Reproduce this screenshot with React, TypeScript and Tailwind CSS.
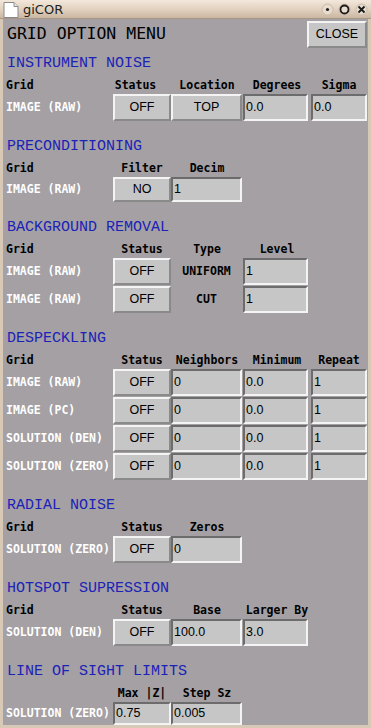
import React from "react";

const mono = "font-['DejaVu_Sans_Mono',monospace]";
const sans = "font-['Liberation_Sans',Arial,sans-serif]";

const widths = ["w-[58px]", "w-[71px]", "w-[65px]", "w-[56px]"];

type Cell =
  | { kind: "btn"; text: string }
  | { kind: "field"; text: string }
  | { kind: "label"; text: string }
  | { kind: "none" };

function Heading({ children, first }: { children: React.ReactNode; first?: boolean }) {
  return (
    <div
      className={`${first ? "h-[21px] pt-[6px]" : "h-[33px] pt-[18px]"} pl-[4px] font-['Liberation_Mono',monospace] text-[15px] leading-[15px] text-[#1a22b8] whitespace-pre`}
    >
      {children}
    </div>
  );
}

function Headers({ grid, cols, statusShift }: { grid?: boolean; cols: string[]; statusShift?: boolean }) {
  return (
    <div className={`grid grid-cols-[110px_58px_72px_68px_56px] h-[23px] pt-[8px] ${mono} font-bold text-[11.5px] leading-[12px] text-black whitespace-pre`}>
      <div className="pl-[3px]">{grid ? "Grid" : ""}</div>
      {cols.map((c, i) => (
        <div key={i} className={`text-center ${i === 0 && statusShift ? "pr-[13px]" : ""}`}>
          {c}
        </div>
      ))}
    </div>
  );
}

function Row({ label, cells, h = "h-[27px]" }: { label: string; cells: Cell[]; h?: string }) {
  return (
    <div className={`grid grid-cols-[110px_58px_72px_68px_56px] ${h}`}>
      <div className={`flex items-center pl-[3px] ${mono} font-bold text-[11.5px] text-white whitespace-pre`}>{label}</div>
      {cells.map((c, i) => {
        if (c.kind === "btn")
          return (
            <div
              key={i}
              className={`${widths[i]} h-full flex items-center justify-center bg-[#c6c6c6] border-2 border-t-[#f4f4f4] border-l-[#f4f4f4] border-b-[#8a8a8a] border-r-[#8a8a8a] ${sans} text-[12.5px] text-black`}
            >
              {c.text}
            </div>
          );
        if (c.kind === "field")
          return (
            <div
              key={i}
              className={`${widths[i]} h-full flex items-center pl-[1px] bg-[#c6c6c6] border-2 border-t-[#6c6c6c] border-l-[#6c6c6c] border-b-[#f4f4f4] border-r-[#f4f4f4] ${sans} text-[12.5px] text-black`}
            >
              {c.text}
            </div>
          );
        if (c.kind === "label")
          return (
            <div key={i} className={`${widths[i]} h-full flex items-center justify-center ${mono} font-bold text-[11.5px] text-black`}>
              {c.text}
            </div>
          );
        return <div key={i} />;
      })}
    </div>
  );
}

const B = (t: string): Cell => ({ kind: "btn", text: t });
const F = (t: string): Cell => ({ kind: "field", text: t });
const L = (t: string): Cell => ({ kind: "label", text: t });

function TitleBar() {
  return (
    <div className="h-[19px] flex items-center bg-linear-to-b from-[#f3e8dc] via-[#e2d2c0] to-[#cbb7a2] border-b border-[#a89684]">
      <svg width="20" height="19" viewBox="0 0 20 19" className="ml-[1px]">
        <path d="M3 2.5 H13 L17 6.5 V17.5 H3 Z" fill="#ffffff" stroke="#8a8a8a" strokeWidth="1" />
        <path d="M13 2.5 V6.5 H17" fill="#e6e6e6" stroke="#8a8a8a" strokeWidth="1" />
      </svg>
      <span className="ml-[2px] font-['DejaVu_Sans',sans-serif] text-[13px] leading-[19px] text-[#222]">giCOR</span>
      <div className="ml-auto flex items-center gap-[4px] mr-[3px]">
        <svg width="13" height="13" viewBox="0 0 13 13">
          <circle cx="6.5" cy="6.5" r="5.5" fill="#e8dccf" stroke="#c9b9a8" />
          <circle cx="6.5" cy="6.5" r="1.6" fill="#222" />
        </svg>
        <svg width="13" height="13" viewBox="0 0 13 13">
          <circle cx="6.5" cy="6.5" r="5.5" fill="#e8dccf" stroke="#c9b9a8" />
          <circle cx="6.5" cy="6.5" r="4" fill="none" stroke="#1a1a1a" strokeWidth="1.8" />
        </svg>
        <svg width="13" height="13" viewBox="0 0 13 13">
          <circle cx="6.5" cy="6.5" r="5.5" fill="#e8dccf" stroke="#c9b9a8" />
          <path d="M3.5 3.5 L9.5 9.5 M9.5 3.5 L3.5 9.5" stroke="#1a1a1a" strokeWidth="1.8" />
        </svg>
      </div>
    </div>
  );
}

export default function App() {
  return (
    <div className="w-[371px] h-[728px] overflow-hidden flex flex-col bg-[#d8c8b6]">
      <TitleBar />
      <div className="mx-[3px] flex-1 mb-[3px] bg-[#a4a0a4] overflow-hidden">
        <div className="h-[31px] flex items-start">
          <div className={`pl-[4px] pt-[6px] ${mono} text-[16.5px] leading-[17px] text-black whitespace-pre`}>GRID OPTION MENU</div>
          <div
            className={`ml-auto mr-[1px] mt-[2px] w-[60px] h-[27px] flex items-center justify-center bg-[#c6c6c6] border-2 border-t-[#f4f4f4] border-l-[#f4f4f4] border-b-[#8a8a8a] border-r-[#8a8a8a] ${sans} text-[12.5px] text-black`}
          >
            CLOSE
          </div>
        </div>

        <Heading first>INSTRUMENT NOISE</Heading>
        <Headers grid statusShift cols={["Status", "Location", "Degrees", "Sigma"]} />
        <Row label="IMAGE (RAW)" cells={[B("OFF"), B("TOP"), F("0.0"), F("0.0")]} />

        <Heading>PRECONDITIONING</Heading>
        <Headers grid cols={["Filter", "Decim"]} />
        <Row label="IMAGE (RAW)" h="h-[25px]" cells={[B("NO"), F("1")]} />

        <Heading>BACKGROUND REMOVAL</Heading>
        <Headers grid cols={["Status", "Type", "Level"]} />
        <div className="flex flex-col gap-[1px]">
          <Row label="IMAGE (RAW)" cells={[B("OFF"), L("UNIFORM"), F("1")]} />
          <Row label="IMAGE (RAW)" cells={[B("OFF"), L("CUT"), F("1")]} />
        </div>

        <Heading>DESPECKLING</Heading>
        <Headers grid cols={["Status", "Neighbors", "Minimum", "Repeat"]} />
        <div className="flex flex-col gap-[1px]">
          <Row label="IMAGE (RAW)" cells={[B("OFF"), F("0"), F("0.0"), F("1")]} />
          <Row label="IMAGE (PC)" cells={[B("OFF"), F("0"), F("0.0"), F("1")]} />
          <Row label="SOLUTION (DEN)" cells={[B("OFF"), F("0"), F("0.0"), F("1")]} />
          <Row label="SOLUTION (ZERO)" cells={[B("OFF"), F("0"), F("0.0"), F("1")]} />
        </div>

        <Heading>RADIAL NOISE</Heading>
        <Headers grid cols={["Status", "Zeros"]} />
        <Row label="SOLUTION (ZERO)" cells={[B("OFF"), F("0")]} />

        <Heading>HOTSPOT SUPRESSION</Heading>
        <Headers grid cols={["Status", "Base", "Larger By"]} />
        <Row label="SOLUTION (DEN)" cells={[B("OFF"), F("100.0"), F("3.0")]} />

        <Heading>LINE OF SIGHT LIMITS</Heading>
        <Headers cols={["Max |Z|", "Step Sz"]} />
        <Row label="SOLUTION (ZERO)" h="h-[22px]" cells={[F("0.75"), F("0.005")]} />
      </div>
    </div>
  );
}
